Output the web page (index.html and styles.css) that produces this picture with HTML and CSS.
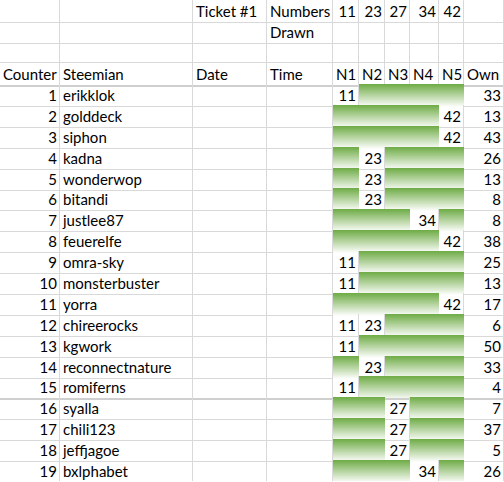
FILE: index.html
```html
<!DOCTYPE html>
<html>
<head>
<meta charset="utf-8">
<link rel="stylesheet" href="styles.css">
</head>
<body>
<div class="sheet">
  <div class="row"><div class="c"></div><div class="c"></div><div class="c">Ticket #1</div><div class="c">Numbers</div><div class="c r">11</div><div class="c r">23</div><div class="c r">27</div><div class="c r">34</div><div class="c r">42</div><div class="c"></div></div>
  <div class="row"><div class="c"></div><div class="c"></div><div class="c"></div><div class="c">Drawn</div><div class="c"></div><div class="c"></div><div class="c"></div><div class="c"></div><div class="c"></div><div class="c"></div></div>
  <div class="row"><div class="c"></div><div class="c"></div><div class="c"></div><div class="c"></div><div class="c"></div><div class="c"></div><div class="c"></div><div class="c"></div><div class="c"></div><div class="c"></div></div>
  <div class="row thick"><div class="c">Counter</div><div class="c">Steemian</div><div class="c">Date</div><div class="c">Time</div><div class="c">N1</div><div class="c">N2</div><div class="c">N3</div><div class="c">N4</div><div class="c">N5</div><div class="c">Own</div></div>

  <div class="row data"><div class="c r">1</div><div class="c">erikklok</div><div class="c"></div><div class="c"></div><div class="c r">11</div><div class="c g"></div><div class="c g"></div><div class="c g"></div><div class="c g"></div><div class="c r">33</div></div>
  <div class="row data"><div class="c r">2</div><div class="c">golddeck</div><div class="c"></div><div class="c"></div><div class="c g"></div><div class="c g"></div><div class="c g"></div><div class="c g"></div><div class="c r">42</div><div class="c r">13</div></div>
  <div class="row data"><div class="c r">3</div><div class="c">siphon</div><div class="c"></div><div class="c"></div><div class="c g"></div><div class="c g"></div><div class="c g"></div><div class="c g"></div><div class="c r">42</div><div class="c r">43</div></div>
  <div class="row data"><div class="c r">4</div><div class="c">kadna</div><div class="c"></div><div class="c"></div><div class="c g"></div><div class="c r">23</div><div class="c g"></div><div class="c g"></div><div class="c g"></div><div class="c r">26</div></div>
  <div class="row data"><div class="c r">5</div><div class="c">wonderwop</div><div class="c"></div><div class="c"></div><div class="c g"></div><div class="c r">23</div><div class="c g"></div><div class="c g"></div><div class="c g"></div><div class="c r">13</div></div>
  <div class="row data"><div class="c r">6</div><div class="c">bitandi</div><div class="c"></div><div class="c"></div><div class="c g"></div><div class="c r">23</div><div class="c g"></div><div class="c g"></div><div class="c g"></div><div class="c r">8</div></div>
  <div class="row data"><div class="c r">7</div><div class="c">justlee87</div><div class="c"></div><div class="c"></div><div class="c g"></div><div class="c g"></div><div class="c g"></div><div class="c r">34</div><div class="c g"></div><div class="c r">8</div></div>
  <div class="row data"><div class="c r">8</div><div class="c">feuerelfe</div><div class="c"></div><div class="c"></div><div class="c g"></div><div class="c g"></div><div class="c g"></div><div class="c g"></div><div class="c r">42</div><div class="c r">38</div></div>
  <div class="row data"><div class="c r">9</div><div class="c">omra-sky</div><div class="c"></div><div class="c"></div><div class="c r">11</div><div class="c g"></div><div class="c g"></div><div class="c g"></div><div class="c g"></div><div class="c r">25</div></div>
  <div class="row data"><div class="c r">10</div><div class="c">monsterbuster</div><div class="c"></div><div class="c"></div><div class="c r">11</div><div class="c g"></div><div class="c g"></div><div class="c g"></div><div class="c g"></div><div class="c r">13</div></div>
  <div class="row data"><div class="c r">11</div><div class="c">yorra</div><div class="c"></div><div class="c"></div><div class="c g"></div><div class="c g"></div><div class="c g"></div><div class="c g"></div><div class="c r">42</div><div class="c r">17</div></div>
  <div class="row data"><div class="c r">12</div><div class="c">chireerocks</div><div class="c"></div><div class="c"></div><div class="c r">11</div><div class="c r">23</div><div class="c g"></div><div class="c g"></div><div class="c g"></div><div class="c r">6</div></div>
  <div class="row data"><div class="c r">13</div><div class="c">kgwork</div><div class="c"></div><div class="c"></div><div class="c r">11</div><div class="c g"></div><div class="c g"></div><div class="c g"></div><div class="c g"></div><div class="c r">50</div></div>
  <div class="row data"><div class="c r">14</div><div class="c">reconnectnature</div><div class="c"></div><div class="c"></div><div class="c g"></div><div class="c r">23</div><div class="c g"></div><div class="c g"></div><div class="c g"></div><div class="c r">33</div></div>
  <div class="row data thick"><div class="c r">15</div><div class="c">romiferns</div><div class="c"></div><div class="c"></div><div class="c r">11</div><div class="c g"></div><div class="c g"></div><div class="c g"></div><div class="c g"></div><div class="c r">4</div></div>
  <div class="row data"><div class="c r">16</div><div class="c">syalla</div><div class="c"></div><div class="c"></div><div class="c g"></div><div class="c g"></div><div class="c r">27</div><div class="c g"></div><div class="c g"></div><div class="c r">7</div></div>
  <div class="row data"><div class="c r">17</div><div class="c">chili123</div><div class="c"></div><div class="c"></div><div class="c g"></div><div class="c g"></div><div class="c r">27</div><div class="c g"></div><div class="c g"></div><div class="c r">37</div></div>
  <div class="row data"><div class="c r">18</div><div class="c">jeffjagoe</div><div class="c"></div><div class="c"></div><div class="c g"></div><div class="c g"></div><div class="c r">27</div><div class="c g"></div><div class="c g"></div><div class="c r">5</div></div>
  <div class="row data"><div class="c r">19</div><div class="c">bxlphabet</div><div class="c"></div><div class="c"></div><div class="c g"></div><div class="c g"></div><div class="c g"></div><div class="c r">34</div><div class="c g"></div><div class="c r">26</div></div>
</div>
</body>
</html>
```
FILE: styles.css
```css
html, body {
  margin: 0;
  padding: 0;
  background: #fff;
}
body {
  font-family: Lato, "Liberation Sans", sans-serif;
  font-size: 15px;
  color: #000;
  overflow: hidden;
}
.sheet {
  display: flex;
  flex-direction: column;
  width: 504px;
}
.row {
  display: grid;
  grid-template-columns: 60px 133px 74px 66px 26px 26px 25px 29px 25px 40px;
  height: 21px;
}
.row.data {
  height: 20.9px;
}
.c {
  box-sizing: border-box;
  border-right: 1px solid #d9d9d9;
  border-bottom: 1px solid #d9d9d9;
  padding: 1px 2px 0 3px;
  line-height: 21px;
  white-space: nowrap;
  overflow: visible;
}
.row.thick .c {
  border-bottom: 2px solid #cfcfcf;
}
.r {
  text-align: right;
}
.g {
  background: linear-gradient(to bottom, #6eab45 0%, #ffffff 100%);
  background-origin: border-box;
  border-color: transparent;
}
```
